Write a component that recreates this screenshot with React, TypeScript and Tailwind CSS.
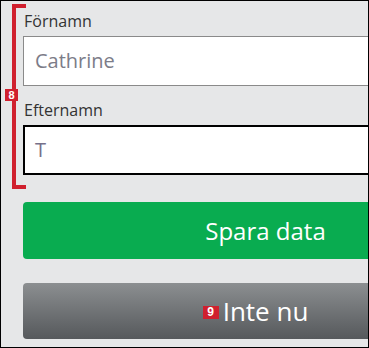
import React, { FC } from 'react';

const Badge: FC<{ n: string; className: string }> = ({ n, className }) => (
    <span
        className={`absolute flex items-center justify-center bg-[#d0202e] text-white font-bold leading-none ${className}`}
        style={{ fontFamily: '"Liberation Sans", Arial, sans-serif' }}
    >
        {n}
    </span>
);

const App: FC = () => {
    return (
        <div
            className="relative w-[369px] h-[348px] overflow-hidden border border-black bg-[#e6e7e8]"
            style={{ fontFamily: '"Open Sans", sans-serif' }}
        >
            {/* Annotation bracket around the name fields */}
            <div className="absolute left-[11px] top-[3px] w-[14px] h-[185px] border-l-4 border-t-4 border-b-4 border-[#d0202e]" />
            <Badge n="8" className="left-[4px] top-[88px] w-[13px] h-[12px] text-[11px]" />

            <div className="flex flex-col pl-[22px] pt-[9px]">
                <label className="text-[16px] leading-[22px] text-[#333] pl-[1px]">Förnamn</label>
                <div className="mt-[4px] w-[485px] h-[50px] flex items-center bg-white border border-[#8a8a8a] pl-[11px] text-[20px] text-[#7c7c88]">
                    Cathrine
                </div>

                <label className="mt-[13px] text-[16px] leading-[22px] text-[#333] pl-[1px]">Efternamn</label>
                <div className="mt-[4px] w-[485px] h-[50px] flex items-center bg-white border-2 border-black pl-[10px] text-[20px] text-[#76708a]">
                    T
                </div>

                <button className="mt-[27px] w-[485px] h-[57px] rounded-[4px] bg-[#09ac50] text-white text-[24px] flex items-center justify-center">
                    Spara data
                </button>

                <button className="relative mt-[24px] w-[485px] h-[56px] rounded-[4px] bg-gradient-to-b from-[#8c8f91] to-[#56595c] text-white text-[26px] flex items-center justify-center">
                    <span className="relative">
                        <Badge n="9" className="left-[-20px] top-[14px] w-[16px] h-[13px] text-[12px]" />
                        Inte nu
                    </span>
                </button>
            </div>
        </div>
    );
};

export default App;
